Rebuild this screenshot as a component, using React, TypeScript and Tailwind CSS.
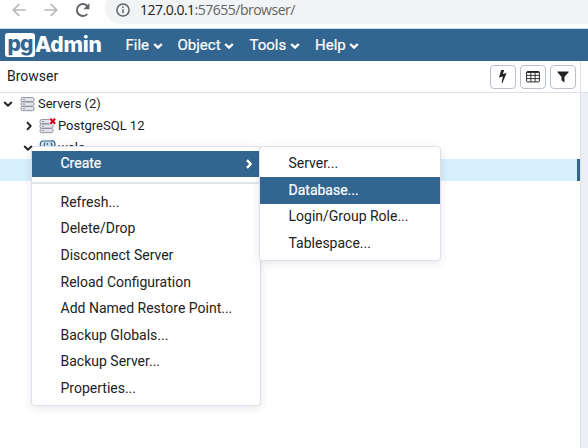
import React from 'react';

const menus = [
  { label: 'File', box: 'w-[52px]' },
  { label: 'Object', box: 'w-[72px]' },
  { label: 'Tools', box: 'w-[65.5px]' },
  { label: 'Help', box: 'w-[60px]' },
];

const actions = [
  'Refresh...',
  'Delete/Drop',
  'Disconnect Server',
  'Reload Configuration',
  'Add Named Restore Point...',
  'Backup Globals...',
  'Backup Server...',
  'Properties...',
];

const createItems = ['Server...', 'Database...', 'Login/Group Role...', 'Tablespace...'];

function Chevron({ right = false, bold = false, className = '' }: { right?: boolean; bold?: boolean; className?: string }) {
  return (
    <svg
      className={className}
      width="10"
      height="10"
      viewBox="0 0 10 10"
      fill="none"
      stroke="currentColor"
      strokeWidth={bold ? 2.4 : 1.9}
      strokeLinejoin="round"
    >
      <path d={right ? 'm3 1.2 3.7 3.8L3 8.8' : 'M1.2 3 5 6.7 8.8 3'} />
    </svg>
  );
}

function Arrow({ flip = false }: { flip?: boolean }) {
  return (
    <svg className={flip ? 'rotate-180' : ''} width="14" height="14" viewBox="0 0 14 14" fill="none" stroke="#b5b7ba" strokeWidth="1.7">
      <path d="M13.5 7H1.5M7.3 1 1.3 7l6 6" />
    </svg>
  );
}

function BrowserBar() {
  return (
    <div className="flex h-7 shrink-0 overflow-hidden bg-white">
      <div className="flex h-5 items-center pl-3">
        <Arrow />
        <div className="w-[18px]" />
        <Arrow flip />
        <svg className="ml-[17px]" width="16" height="16" viewBox="0 0 16 16">
          <path d="M12.3 12.1A6 6 0 1 1 12.4 4" fill="none" stroke="#5f6368" strokeWidth="1.9" />
          <path d="M14.4 1v6.3H8.4z" fill="#5f6368" />
        </svg>
      </div>
      <div className="-mt-2 ml-[14px] flex h-8 flex-1 items-center rounded-l-full bg-[#f1f3f4] pl-[11px]">
        <svg className="mt-[4px]" width="14" height="14" viewBox="0 0 14 14" fill="none" stroke="#5f6368" strokeWidth="1.5">
          <circle cx="7" cy="7" r="6.1" />
          <path d="M7 6.3v4M7 3.4v1.5" />
        </svg>
        <span className="ml-[10px] mt-[4px] font-['Open_Sans',sans-serif] text-[14px] leading-5 tracking-[-0.5px] whitespace-nowrap text-[#5f6368]">
          <span className="text-[#202124]">127.0.0.1</span>:57655/browser/
        </span>
      </div>
    </div>
  );
}

function Logo() {
  return (
    <div className="flex h-6 w-[113px] items-center font-['Inter',sans-serif] font-extrabold">
      <div className="flex h-6 w-[30px] justify-center rounded-[3px] bg-white text-[21px] leading-[21px] tracking-[-0.8px] text-[#326690]">
        pg
      </div>
      <div className="text-[21px] leading-6 tracking-[-0.2px] text-white">Admin</div>
    </div>
  );
}

function NavBar() {
  return (
    <div className="flex h-[33px] shrink-0 items-center border-t border-[#c9dbe7] bg-[#326690] pl-[5px] text-[15px] text-white">
      <Logo />
      <div className="flex pl-[7.5px]">
        {menus.map((m) => (
          <div key={m.label} className={`flex items-center ${m.box}`}>
            <span className="[-webkit-text-stroke:0.2px_white]">{m.label}</span>
            <Chevron bold className="ml-[3.5px] mt-px" />
          </div>
        ))}
      </div>
    </div>
  );
}

function ToolButton({ children }: { children: React.ReactNode }) {
  return (
    <div className="flex h-6 w-[26px] items-center justify-center rounded-[4px] border border-[#bac1cd]">{children}</div>
  );
}

function BrowserHeader() {
  return (
    <div className="flex h-8 shrink-0 items-center justify-between border-b border-[#dde0e6] pr-1 pl-[7px]">
      <span className="text-[14px] text-[#222]">Browser</span>
      <div className="flex gap-1">
        <ToolButton>
          <svg width="8" height="13" viewBox="0 0 8 13">
            <path d="M2.2 0h3L3.8 4l3.8-.9L3.4 13h-.8l1.2-6.4L0 7.5z" fill="#222" />
          </svg>
        </ToolButton>
        <ToolButton>
          <svg width="14" height="12" viewBox="0 0 14 12" fill="none" stroke="#222">
            <rect x=".6" y=".6" width="12.8" height="10.3" rx="1" />
            <path d="M1 1h12" strokeWidth="1.8" />
            <path d="M1 4.4h12M1 7.6h12M4.8 1.5v9M9.1 1.5v9" strokeWidth=".9" />
          </svg>
        </ToolButton>
        <ToolButton>
          <svg width="12" height="12" viewBox="0 0 12 12">
            <path d="M.7.5h10.6q.7.2.3.8L7.5 5.8v5.7L4.5 9.2V5.8L.4 1.3Q0 .7.7.5Z" fill="#222" />
          </svg>
        </ToolButton>
      </div>
    </div>
  );
}

function ServerStack({ broken = false }: { broken?: boolean }) {
  return (
    <svg width="18" height="16" viewBox="0 0 18 16" fill="#e3e3ea" stroke="#8a8a9c" strokeWidth=".9">
      <rect x="1" y="1.5" width="13" height="4.2" rx="1.6" />
      <rect x="1" y="6" width="13" height="4.2" rx="1.6" />
      <rect x="1" y="10.5" width="13" height="4.2" rx="1.6" />
      <path d="M3 3.6h2M3 8.1h2M3 12.6h2" />
      {broken && (
        <>
          <path d="M10.5-1H18v7.5h-7.5z" fill="#fff" stroke="none" />
          <path d="m11.3.7 4.8 5m0-5-4.8 5" stroke="#d0021b" strokeWidth="2.1" />
        </>
      )}
    </svg>
  );
}

function Tree() {
  return (
    <div className="flex flex-col text-[13px] text-[#222]">
      <div className="flex h-[22px] items-center pl-[3px]">
        <Chevron />
        <div className="ml-[7px] flex w-[18px]"><ServerStack /></div>
        <span>Servers (2)</span>
      </div>
      <div className="flex h-[22px] items-center pl-[24px]">
        <Chevron right />
        <div className="ml-[5px] flex w-[19px]"><ServerStack broken /></div>
        <span>PostgreSQL 12</span>
      </div>
      <div className="flex h-[22px] items-center pl-[22.5px]">
        <Chevron />
        <svg className="ml-[6.5px]" width="18" height="16" viewBox="0 0 18 16" fill="#d5e6f2" stroke="#326690" strokeWidth="1.2">
          <path d="M4 1C1 1 .8 5 2 8l2 4 2-2 1 4h3l1-5 3 1 2-5c.5-3-2-5-4-4L9 1 6 1Z" />
          <path d="M6 2.5Q4.5 5 6 8m6-5.5q2 3 0 6M8.5 3v2" fill="none" />
        </svg>
        <span className="ml-px">wale</span>
      </div>
      <div className="h-[22px] border-r-[3px] border-[#326690] bg-[#d6effc]" />
    </div>
  );
}

function ContextMenu() {
  return (
    <div className="absolute top-[146px] left-[31px] h-[260px] w-[230px] rounded-[4px] border border-[#dde0e6] bg-white pt-1 text-[14px] text-[#222] shadow-[0_2px_8px_rgba(40,50,90,0.12)]">
      <div className="flex h-[26px] items-center justify-between bg-[#326690] pr-[6px] pl-[28.5px] text-white">
        <span className="relative -top-px [-webkit-text-stroke:0.2px_white]">Create</span>
        <Chevron right bold />
      </div>
      <div className="mt-[5px] mb-[5px] h-[2px] bg-[#e1e5ec]" />
      {actions.map((a) => (
        <div key={a} className="flex h-[26.6px] items-center pl-[28.5px] whitespace-nowrap">{a}</div>
      ))}
    </div>
  );
}

function CreateMenu() {
  return (
    <div className="absolute top-[146px] left-[259px] h-[115px] w-[182px] rounded-[4px] border border-[#dde0e6] bg-white pt-[3px] text-[14px] text-[#222] shadow-[0_2px_8px_rgba(40,50,90,0.12)]">
      {createItems.map((c) => (
        <div
          key={c}
          className={
            c === 'Database...'
              ? 'flex h-[27px] items-center bg-[#326690] pl-[28.5px] text-white [-webkit-text-stroke:0.2px_white]'
              : 'flex h-[26.6px] items-center pl-[28.5px]'
          }
        >
          {c}
        </div>
      ))}
    </div>
  );
}

export default function App() {
  return (
    <div className="relative flex h-[448px] w-[588px] flex-col overflow-hidden bg-white font-['Roboto',sans-serif]">
      <BrowserBar />
      <NavBar />
      <div className="flex min-h-0 flex-1">
        <div className="flex w-[580px] flex-col">
          <BrowserHeader />
          <Tree />
        </div>
        <div className="flex w-2 flex-col border-l border-[#dde0e6] bg-[#ebeef3]">
          <div className="h-8 border-b border-[#dde0e6] bg-white" />
        </div>
      </div>
      <ContextMenu />
      <CreateMenu />
    </div>
  );
}
